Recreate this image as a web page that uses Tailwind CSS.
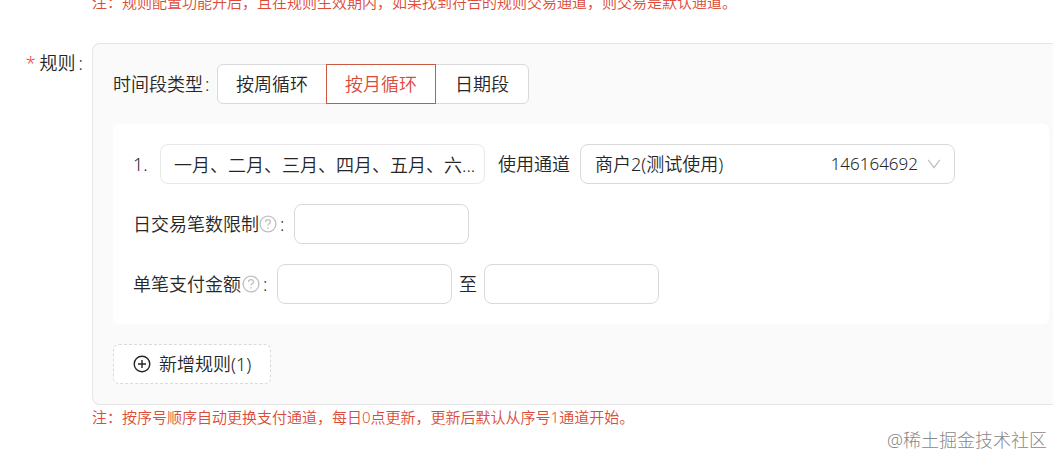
<!DOCTYPE html>
<html lang="zh-CN">
<head>
<meta charset="utf-8">
<meta name="viewport" content="width=device-width, initial-scale=1">
<title>规则配置</title>
<script src="https://cdn.jsdelivr.net/npm/@tailwindcss/browser@4"></script>
</head>
<body class="relative min-h-screen overflow-hidden bg-white font-['Noto_Sans','Noto_Sans_CJK_SC',sans-serif] text-[18px] font-[350] leading-6 text-[#262626]">
<form>
  <p class="-mt-[10px] ml-[92px] text-[15px] leading-6 text-[#dc4a38]">注：规则配置功能开后，且在规则生效期内，如果找到符合的规则交易通道，则交易是默认通道。</p>

  <div class="mt-[29px] flex">
    <div class="flex h-10 w-[92px] shrink-0 items-center justify-end gap-1 pr-[9px]">
      <span class="text-[#e5484d]">*</span><span>规则<span class="pl-[3px]">:</span></span>
    </div>
    <section class="min-w-0 flex-1 rounded-l-lg border-y border-l border-[#e6e6e6] bg-[#fafafa] py-5 pl-5 pr-1">
      <div role="radiogroup" aria-labelledby="period-label" class="flex h-10 items-center">
        <span id="period-label" class="w-[104px]">时间段类型<span class="pl-[2px]">:</span></span>
        <label class="flex h-10 items-center rounded-l-md border border-[#d9d9d9] bg-white px-[18px]"><input type="radio" name="period" class="sr-only">按周循环</label>
        <label class="z-10 -ml-px flex h-10 items-center border border-[#cb5a42] bg-white px-[18px] text-[#dc4a38]"><input type="radio" name="period" class="sr-only" checked>按月循环</label>
        <label class="-ml-px flex h-10 items-center rounded-r-md border border-[#d9d9d9] bg-white px-[19px]"><input type="radio" name="period" class="sr-only">日期段</label>
      </div>

      <div class="mt-5 flex flex-col gap-5 rounded-md bg-white p-5">
        <div class="flex h-10 items-center">
          <label for="months" class="w-[27px]">1.</label>
          <input id="months" type="text" readonly value="一月、二月、三月、四月、五月、六..." class="h-10 w-[325px] rounded-lg border border-[#e8e8e8] bg-white pl-[13px]">
          <label for="channel" class="ml-[13px] w-[82px]">使用通道</label>
          <div class="relative h-10 w-[375px]">
            <select id="channel" class="h-10 w-full appearance-none rounded-lg border border-[#d9d9d9] bg-white pl-[14px]">
              <option>商户2(测试使用)</option>
            </select>
            <div class="pointer-events-none absolute inset-y-0 right-[14px] flex items-center gap-[9px] text-[17px]">
              <span>146164692</span>
              <svg class="h-[14px] w-[14px]" viewBox="0 0 14 14" fill="none" stroke="#bfbfbf" stroke-width="1.2"><path d="M1.2 2.8 7 10.7l5.8-7.9"/></svg>
            </div>
          </div>
        </div>
        <div class="flex h-10 items-center">
          <label for="daily">日交易笔数限制</label>
          <svg class="h-[18px] w-[18px]" viewBox="0 0 18 18" fill="none" stroke="#bfbfbf" stroke-width="1.3"><circle cx="9" cy="9" r="7.9"/><path d="M6.5 7.1c0-3.2 5-3.1 5-.2 0 1.8-2.5 1.6-2.5 3.7"/><circle cx="9" cy="12.9" r=".8" fill="#bfbfbf" stroke="none"/></svg>
          <span class="w-[17px] pl-[3px]">:</span>
          <input id="daily" type="text" class="h-10 w-[175px] rounded-lg border border-[#d9d9d9] bg-white px-3">
        </div>
        <div class="flex h-10 items-center">
          <label for="min">单笔支付金额</label>
          <svg class="ml-px h-[18px] w-[18px]" viewBox="0 0 18 18" fill="none" stroke="#bfbfbf" stroke-width="1.3"><circle cx="9" cy="9" r="7.9"/><path d="M6.5 7.1c0-3.2 5-3.1 5-.2 0 1.8-2.5 1.6-2.5 3.7"/><circle cx="9" cy="12.9" r=".8" fill="#bfbfbf" stroke="none"/></svg>
          <span class="w-[17px] pl-[3px]">:</span>
          <input id="min" type="text" class="h-10 w-[175px] rounded-lg border border-[#d9d9d9] bg-white px-3">
          <label for="max" class="px-[7px]">至</label>
          <input id="max" type="text" class="h-10 w-[175px] rounded-lg border border-[#d9d9d9] bg-white px-3">
        </div>
      </div>

      <button type="button" class="mt-5 flex h-10 items-center gap-2 rounded-md border border-dashed border-[#d9d9d9] bg-white px-[19px]">
        <svg class="h-[18px] w-[18px]" viewBox="0 0 18 18" fill="none" stroke="#262626" stroke-width="1.4"><circle cx="9" cy="9" r="7.8"/><path d="M9 5v8M5 9h8"/></svg>
        新增规则(1)
      </button>
    </section>
  </div>
  <p class="ml-[92px] text-[15px] leading-6 text-[#dc4a38]">注：按序号顺序自动更换支付通道，每日0点更新，更新后默认从序号1通道开始。</p>
</form>
<div class="pointer-events-none absolute bottom-1 right-[6px] font-light text-[#888]">@稀土掘金技术社区</div>
</body>
</html>
